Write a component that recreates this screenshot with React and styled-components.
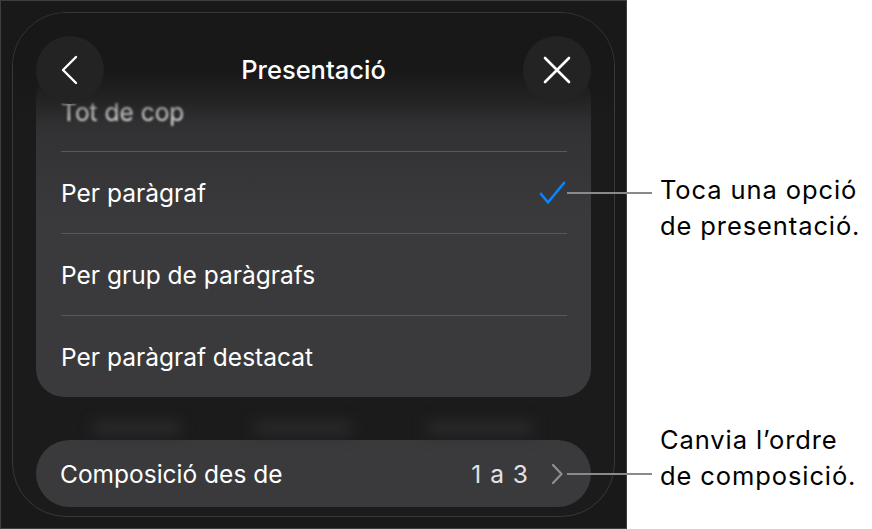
import React from "react";
import styled, { createGlobalStyle } from "styled-components";

const GlobalStyle = createGlobalStyle`
  html, body { margin: 0; padding: 0; background: #ffffff; }
  body { font-family: Inter, "Noto Sans", "Liberation Sans", sans-serif; }
  * { box-sizing: border-box; }
`;

const Page = styled.div`
  display: flex;
  width: 872px;
  height: 529px;
  background: #ffffff;
`;

const Panel = styled.div`
  width: 627px;
  height: 529px;
  flex: none;
  border: 1px solid #3e3e3e;
  background: #19191a;
  padding: 11px;
`;

const Screen = styled.div`
  position: relative;
  height: 100%;
  border: 1px solid #38383a;
  border-radius: 54px;
  background: #1b1b1c;
  padding: 57px 23px 9px;
  display: flex;
  flex-direction: column;
  overflow: hidden;
`;

const Header = styled.div`
  position: absolute;
  top: 0;
  left: 0;
  right: 0;
  height: 110px;
  padding: 23px 23px 0;
  display: flex;
  align-items: flex-start;
  justify-content: space-between;
  background: linear-gradient(
    to bottom,
    rgba(24, 24, 25, 1) 0px,
    rgba(24, 24, 25, 1) 56px,
    rgba(24, 24, 25, 0.55) 80px,
    rgba(24, 24, 25, 0) 110px
  );
  z-index: 2;
`;

const RoundButton = styled.div`
  width: 68px;
  height: 68px;
  border-radius: 50%;
  background: #232324;
  display: flex;
  align-items: center;
  justify-content: center;
`;

const Title = styled.div`
  color: #ffffff;
  font-size: 25.5px;
  font-weight: 500;
  line-height: 68px;
`;

const Card = styled.div`
  border-radius: 28px;
  background: linear-gradient(to bottom, #262627 0px, #333335 70px, #3a3a3c 150px, #3a3a3c 100%);
  display: flex;
  flex-direction: column;
  flex: none;
`;

const Row = styled.div`
  height: 81px;
  display: flex;
  align-items: center;
  justify-content: space-between;
  padding: 0 25px;
  color: #ffffff;
  font-size: 24.5px;
`;

const RowLabel = styled.span`
  filter: ${(p) => (p.$blurred ? "blur(1.2px)" : "none")};
  opacity: ${(p) => (p.$blurred ? 0.85 : 1)};
  transform: ${(p) => (p.$blurred ? "translateY(1px)" : "none")};
`;

const Separator = styled.div`
  height: 1px;
  margin: 0 24px 0 25px;
  background: #58585b;
`;

const Ghost = styled.div`
  height: 43px;
  flex: none;
  display: flex;
  align-items: center;
  justify-content: space-around;
  padding: 0 20px;
`;

const Blob = styled.div`
  width: ${(p) => p.$w}px;
  height: 14px;
  border-radius: 7px;
  background: #2a2a2b;
  filter: blur(7px);
  margin-top: 18px;
`;

const BottomCard = styled.div`
  height: 67px;
  flex: none;
  border-radius: 34px;
  background: #3a3a3c;
  display: flex;
  align-items: center;
  padding: 0 28px 0 24px;
  color: #ffffff;
  font-size: 24.5px;
`;

const Grow = styled.span`
  flex: 1;
`;

const Value = styled.span`
  color: #e2e2e4;
  margin-right: 22px;
  letter-spacing: 1px;
`;

const Notes = styled.div`
  flex: 1;
  padding: 172px 0 0 33px;
  display: flex;
  flex-direction: column;
  gap: 178px;
`;

const Note = styled.div`
  position: relative;
  color: #000000;
  font-size: 25.5px;
  line-height: 36px;
  letter-spacing: 0.9px;
  white-space: nowrap;

  &::before {
    content: "";
    position: absolute;
    left: -93px;
    width: 85px;
    top: ${(p) => p.$lineTop}px;
    height: 2px;
    background: #8a8a8a;
  }
`;

const BackIcon = () => (
  <svg width="20" height="30" viewBox="0 0 20 30">
    <path d="M16 2 L3 15 L16 28" fill="none" stroke="#fff" strokeWidth="2.4" strokeLinecap="round" strokeLinejoin="round" />
  </svg>
);

const CloseIcon = () => (
  <svg width="30" height="30" viewBox="0 0 30 30">
    <path d="M3 3 L27 27 M27 3 L3 27" fill="none" stroke="#fff" strokeWidth="2.6" strokeLinecap="round" />
  </svg>
);

const Check = () => (
  <svg width="27" height="24" viewBox="0 0 27 24">
    <path d="M2 13 L9 21.5 L25 2" fill="none" stroke="#0a84ff" strokeWidth="2.6" strokeLinecap="round" strokeLinejoin="round" />
  </svg>
);

const Chevron = () => (
  <svg width="12" height="22" viewBox="0 0 12 22">
    <path d="M2 2 L10.5 11 L2 20" fill="none" stroke="#8e8e92" strokeWidth="2.2" strokeLinecap="round" strokeLinejoin="round" />
  </svg>
);

const options = [
  { label: "Tot de cop", blurred: true },
  { label: "Per paràgraf", checked: true },
  { label: "Per grup de paràgrafs" },
  { label: "Per paràgraf destacat" },
];

export default function App() {
  return (
    <Page>
      <GlobalStyle />
      <Panel>
        <Screen>
          <Header>
            <RoundButton>
              <BackIcon />
            </RoundButton>
            <Title>Presentació</Title>
            <RoundButton>
              <CloseIcon />
            </RoundButton>
          </Header>
          <Card>
            {options.map((o, i) => (
              <React.Fragment key={o.label}>
                {i > 0 && <Separator />}
                <Row>
                  <RowLabel $blurred={o.blurred}>{o.label}</RowLabel>
                  {o.checked && <Check />}
                </Row>
              </React.Fragment>
            ))}
          </Card>
          <Ghost>
            <Blob $w={90} />
            <Blob $w={100} />
            <Blob $w={110} />
          </Ghost>
          <BottomCard>
            <Grow>Composició des de</Grow>
            <Value>1 a 3</Value>
            <Chevron />
          </BottomCard>
        </Screen>
      </Panel>
      <Notes>
        <Note $lineTop={20}>
          Toca una opció
          <br />
          de presentació.
        </Note>
        <Note $lineTop={51}>
          Canvia l’ordre
          <br />
          de composició.
        </Note>
      </Notes>
    </Page>
  );
}
